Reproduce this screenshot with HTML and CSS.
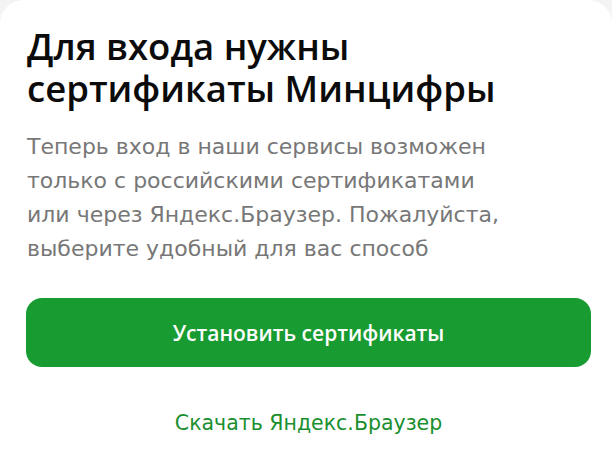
FILE: index.html
```html
<!DOCTYPE html>
<html lang="ru">
<head>
<meta charset="utf-8">
<link rel="stylesheet" href="styles.css">
</head>
<body>
<div class="card">
  <h1 class="title">Для входа нужны сертификаты Минцифры</h1>
  <p class="text">Теперь вход в наши сервисы возможен только с российскими сертификатами или через Яндекс.Браузер. Пожалуйста, выберите удобный для вас способ</p>
  <button class="btn">Установить сертификаты</button>
  <a class="link" href="#">Скачать Яндекс.Браузер</a>
</div>
</body>
</html>
```
FILE: styles.css
```css
html, body {
  margin: 0;
  padding: 0;
  background: #f4f4f4;
  height: 100%;
}
.card {
  background: #ffffff;
  border-radius: 24px 24px 0 0;
  min-height: 100%;
  box-sizing: border-box;
  padding: 25px 21px 0 26px;
  display: flex;
  flex-direction: column;
}
.title {
  margin: 0 0 0 1px;
  max-width: 500px;
  font-family: "Open Sans", sans-serif;
  font-weight: 600;
  font-size: 36.5px;
  line-height: 42px;
  color: #0b0b0b;
}
.text {
  margin: 21px 0 0 1px;
  max-width: 472px;
  font-family: "DejaVu Sans", sans-serif;
  font-size: 22px;
  line-height: 34px;
  color: #777777;
}
.btn {
  margin-top: 32px;
  height: 69px;
  flex-shrink: 0;
  border: none;
  border-radius: 16px;
  background: #189b31;
  color: #ffffff;
  font-family: "Open Sans", sans-serif;
  font-weight: 600;
  font-size: 21px;
}
.link {
  align-self: center;
  margin-top: 44px;
  font-family: "DejaVu Sans", sans-serif;
  font-size: 20.5px;
  color: #1a8f2e;
  text-decoration: none;
}
```
